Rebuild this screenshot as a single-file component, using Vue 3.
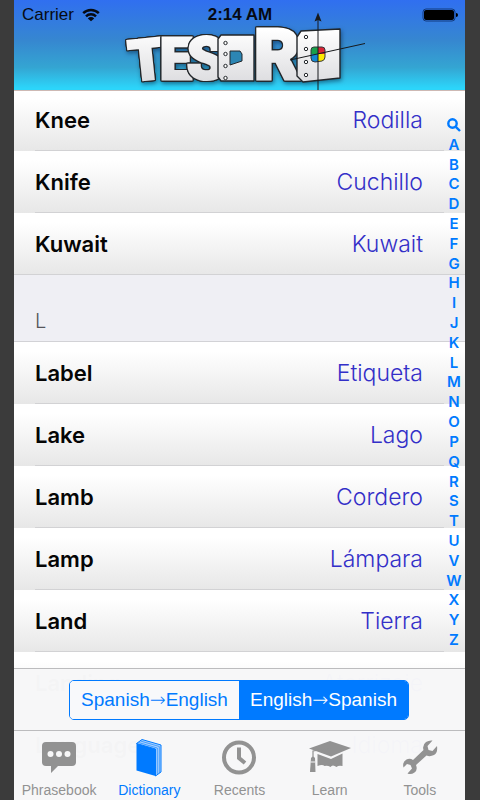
<script setup>
import { ref } from 'vue'

const before = [
  { en: 'Knee', es: 'Rodilla' },
  { en: 'Knife', es: 'Cuchillo' },
  { en: 'Kuwait', es: 'Kuwait' },
]
const after = [
  { en: 'Label', es: 'Etiqueta' },
  { en: 'Lake', es: 'Lago' },
  { en: 'Lamb', es: 'Cordero' },
  { en: 'Lamp', es: 'Lámpara' },
  { en: 'Land', es: 'Tierra' },
  { en: 'Landing', es: 'Aterrizaje' },
  { en: 'Language', es: 'Idioma' },
]
const sections = [
  { title: '', words: before },
  { title: 'L', words: after },
]
const letters = 'ABCDEFGHIJKLMNOPQRSTUVWXYZ'.split('')
const direction = ref('en')
const tabs = ['Phrasebook', 'Dictionary', 'Recents', 'Learn', 'Tools']
const active = ref('Dictionary')
const leftRivets = [43, 54, 66, 78]
const rightRivets = [37, 49, 62, 75]
const glyphs = [
  { c: 'T', x: 131, y: 81, r: -6, s: 56 },
  { c: 'E', x: 160, y: 79, r: 0, s: 57 },
  { c: 'S', x: 187, y: 79, r: 0, s: 60 },
  { c: 'R', x: 254, y: 79, r: 0, s: 71 },
]
</script>

<template>
  <div class="phone">
    <header class="header">
      <div class="status">
        <span class="carrier">
          Carrier
          <svg class="wifi" viewBox="0 0 18 14" aria-hidden="true">
            <path d="M1.2 5.2a11 11 0 0 1 15.6 0M4 8.4a7 7 0 0 1 10 0" />
            <path class="dot" d="M9 13.2 5.8 10.4a4.6 4.6 0 0 1 6.4 0Z" />
          </svg>
        </span>
        <span class="time">2:14 AM</span>
        <svg class="battery" viewBox="0 0 36 14" aria-hidden="true">
          <rect class="case" x="1" y="1" width="32" height="12" rx="3" />
          <rect x="2" y="2" width="30" height="10" rx="2" />
          <path d="M34 5q2 0 2 2t-2 2Z" />
        </svg>
      </div>
      <svg class="logo" viewBox="115 10 250 80" role="img" aria-label="TESORO">
        <defs>
          <linearGradient id="metal" x1="0" y1="30" x2="0" y2="84" gradientUnits="userSpaceOnUse">
            <stop offset="0" stop-color="#fff" />
            <stop offset="1" stop-color="#dcdcdf" />
          </linearGradient>
        </defs>
        <g class="shadowed">
          <text v-for="g in glyphs" :key="g.c" class="face" :x="g.x" :y="g.y" :rotate="g.r" :font-size="g.s">{{ g.c }}</text>
          <path class="plate" d="M221 35H254V81H221L218 77V39Z" />
          <path class="hole" d="M230 51H240L242 54V61L230 65Z" />
          <path class="plate" d="M301 31 340 29V78L303 82L297 76V37Z" />
        </g>
        <g class="rivet">
          <circle v-for="y in leftRivets" :key="y" cx="225.5" :cy="y" r="1.7" />
          <circle v-for="y in rightRivets" :key="y" cx="306" :cy="y" r="1.7" />
        </g>
        <path d="M318 47V54H311V50Q311 47 314 47Z" fill="#19a04b" />
        <path d="M318 47H322Q325 47 325 50V54H318Z" fill="#d92335" />
        <path d="M311 54H318V62H315Q311 62 311 58Z" fill="#1587d2" />
        <path d="M318 54H325V57Q325 60 322 61L318 62Z" fill="#ffe800" />
        <path class="gem" d="M314 47H322Q325 47 325 50V57Q325 60 322 61L315 62Q311 62 311 58V50Q311 47 314 47Z" />
        <path class="axis" d="M318 90V16M290 60 365 43.5" />
        <path d="M318 12.5 321.5 21.5 318 20 314.5 21.5Z" fill="#17191c" />
      </svg>
    </header>

    <main class="list">
      <section v-for="s in sections" :key="s.title" class="section">
        <h2 v-if="s.title" class="heading">{{ s.title }}</h2>
        <ul class="words">
          <li v-for="w in s.words" :key="w.en" class="word">
            <span class="en">{{ w.en }}</span>
            <span class="es">{{ w.es }}</span>
          </li>
        </ul>
      </section>
      <nav class="index" aria-label="Index">
        <a href="#search" aria-label="Search">
          <svg viewBox="0 0 14 14" aria-hidden="true"><circle cx="5.5" cy="5.5" r="4.2" /><path d="m8.8 8.8 4.2 4.2" /></svg>
        </a>
        <a v-for="l in letters" :key="l" :href="'#' + l">{{ l }}</a>
      </nav>
    </main>

    <footer class="footer">
      <div class="switcher">
        <div class="segments">
          <button type="button" :class="{ on: direction === 'es' }" @click="direction = 'es'">Spanish<span class="arrow">→</span>English</button>
          <button type="button" :class="{ on: direction === 'en' }" @click="direction = 'en'">English<span class="arrow">→</span>Spanish</button>
        </div>
      </div>
      <nav class="tabs">
        <button v-for="t in tabs" :key="t" type="button" :class="['tab', { current: active === t }]" @click="active = t">
          <svg v-if="t === 'Phrasebook'" class="icon" viewBox="0 0 44 40" aria-hidden="true">
            <path d="M9 4H35q4 0 4 4V24q0 4-4 4H21L14 35V28H9q-4 0-4-4V8q0-4 4-4Z" />
            <g fill="#f7f7f8"><circle cx="13.5" cy="16" r="3" /><circle cx="22" cy="16" r="3" /><circle cx="30.5" cy="16" r="3" /></g>
          </svg>
          <svg v-else-if="t === 'Dictionary'" class="icon" viewBox="0 0 44 40" aria-hidden="true">
            <path d="M9.5 5.5 15 1.5 34 7V34L28.5 38V11Z" fill="#a9d1ff" />
            <path d="M9.5 5.5 15 1.5 34 7V34L28.5 38V11Z" fill="none" stroke="#007aff" />
            <path d="M11.5 4.5 30.3 10V36M13.5 3 32.3 8.5V35" fill="none" stroke="#007aff" stroke-width=".6" />
            <path d="M9.5 5.5 28.5 11V38L9.5 32.5Z" />
          </svg>
          <svg v-else-if="t === 'Recents'" class="icon" viewBox="0 0 44 40" aria-hidden="true">
            <circle cx="22" cy="19.5" r="15" fill="none" stroke="currentColor" stroke-width="4" />
            <path d="M22 9.5V20L28 25" fill="none" stroke="currentColor" stroke-width="4" />
          </svg>
          <svg v-else-if="t === 'Learn'" class="icon" viewBox="0 0 44 40" aria-hidden="true">
            <path d="M1 10.5 22 3 43 10 23 18.5Z" />
            <path d="M9.5 16 23 21 34.5 15.5V28q-4-1-6 1-4-3-6 0-3-2-6-1-2-2-7 0Z" />
            <path d="M22 10.5 5 13V21" fill="none" stroke="currentColor" stroke-width="1.2" />
            <path d="M3 20q2-3 4 0L7.5 34H2Z" />
            <path d="M2.5 24H7" stroke="#f7f7f8" />
          </svg>
          <svg v-else class="icon" viewBox="0 0 44 40" aria-hidden="true">
            <path d="M34.5 2.5 29.5 8 30.5 12 34.5 13 39 8Q40 14.5 36 17 32 19 28.5 17.5L18 27Q20 32 16.5 34.5 13 37 9.5 35.5L14 30.5 12.5 27 9 26 5.5 29.5Q4 24 8.5 21.5 12 20 15 22L25.5 12Q24 7 28 4 31 2 34.5 2.5Z" />
          </svg>
          <span>{{ t }}</span>
        </button>
      </nav>
    </footer>
  </div>
</template>

<style>
body {
  margin: 0;
  background: #3b3b3b;
}
</style>

<style scoped>
.phone {
  position: relative;
  display: flex;
  flex-direction: column;
  height: 100vh;
  margin: 0 15px 0 14px;
  overflow: hidden;
  background: #fff;
  font-family: Inter, "Liberation Sans", sans-serif;
}
.header {
  position: relative;
  z-index: 1;
  display: flex;
  flex: none;
  flex-direction: column;
  box-sizing: border-box;
  height: 91px;
  border-bottom: 1px solid #cdb9b4;
  background: linear-gradient(#306ff0, #3687d0 45%, #34a5d2 75%, #2cd5fa 98%);
}
.status {
  display: grid;
  grid-template-columns: 1fr auto 1fr;
  align-items: center;
  height: 30px;
  padding: 0 7px 0 8px;
  font-family: "Liberation Sans", sans-serif;
  font-size: 17px;
  color: #060a12;
}
.carrier {
  display: flex;
  align-items: center;
  gap: 8px;
}
.time {
  font-weight: 700;
}
.wifi {
  width: 18px;
  height: 14px;
  fill: none;
  stroke: #060a12;
  stroke-width: 2.4;
}
.wifi .dot {
  fill: #060a12;
  stroke: none;
}
.battery {
  justify-self: end;
  width: 36px;
  height: 14px;
}
.battery .case {
  fill: none;
  stroke: #123a7e;
}
.logo {
  position: absolute;
  top: 10px;
  left: 50%;
  width: 250px;
  height: 80px;
  margin-left: -125px;
}
.face {
  fill: url(#metal);
  stroke: url(#metal);
  stroke-width: 3px;
  font-family: Roboto, "Liberation Sans", sans-serif;
  font-weight: 900;
  filter: drop-shadow(1px 0 0 #22262a) drop-shadow(-1px 0 0 #22262a) drop-shadow(0 1px 0 #22262a) drop-shadow(0 -1px 0 #22262a);
}
.plate {
  fill: url(#metal);
  stroke: #22262a;
  stroke-width: 1.4;
  stroke-linejoin: round;
}
.hole {
  fill: #2c86b4;
  stroke: #22262a;
}
.shadowed {
  filter: drop-shadow(1px 2px 2px rgba(0, 30, 60, 0.5));
}
.rivet {
  fill: #fff;
  stroke: #22262a;
}
.gem {
  fill: none;
  stroke: #34373a;
}
.axis {
  fill: none;
  stroke: #17191c;
}
.list {
  position: relative;
  flex: 1;
  min-height: 0;
  margin-top: -2px;
}
.words {
  margin: 0;
  padding: 0;
  list-style: none;
}
.word {
  position: relative;
  display: flex;
  align-items: center;
  justify-content: space-between;
  box-sizing: border-box;
  height: 62px;
  padding: 0 42px 0 21px;
  background: linear-gradient(#fff 15%, #e7e7e7);
}
.word::after {
  content: "";
  position: absolute;
  right: 21px;
  bottom: 0;
  left: 21px;
  height: 1px;
  background: #d2d2d4;
}
.word:last-child::after {
  right: 0;
  left: 0;
}
.en {
  font-size: 22px;
  font-weight: 600;
  color: #050505;
}
.es {
  font-size: 23px;
  font-weight: 300;
  color: #332fc8;
}
.heading {
  display: flex;
  align-items: flex-end;
  box-sizing: border-box;
  height: 67px;
  margin: 0;
  padding: 0 21px 9px;
  border-bottom: 1px solid #d2d2d6;
  background: #efeff4;
  font-size: 20px;
  line-height: 22px;
  font-weight: 300;
  color: #55555a;
}
.index {
  position: absolute;
  top: 26px;
  right: 3px;
  display: flex;
  flex-direction: column;
  width: 16px;
  height: 535px;
}
.index a {
  display: flex;
  flex: 1;
  align-items: center;
  justify-content: center;
  min-height: 0;
  font-size: 15px;
  line-height: 16px;
  font-weight: 600;
  color: #007aff;
  text-decoration: none;
}
.index svg {
  width: 14px;
  height: 14px;
  fill: none;
  stroke: #007aff;
  stroke-width: 2.4;
}
.footer {
  position: absolute;
  right: 0;
  bottom: 0;
  left: 0;
  z-index: 2;
  background: rgba(247, 247, 248, 0.987);
}
.switcher {
  display: flex;
  align-items: center;
  justify-content: center;
  box-sizing: border-box;
  height: 62px;
  padding-right: 1px;
  border-top: 1px solid #bcbcbe;
}
.segments {
  display: grid;
  grid-template-columns: 1fr 1fr;
  box-sizing: border-box;
  width: 340px;
  height: 40px;
  overflow: hidden;
  border: 1px solid #007aff;
  border-radius: 5px;
}
.segments button {
  padding: 0;
  border: 0;
  background: #f8f9fb;
  font-family: "Liberation Sans", sans-serif;
  font-size: 19px;
  color: #007aff;
  white-space: nowrap;
}
.segments .on {
  background: #007aff;
  color: #fff;
}
.arrow {
  font-family: "DejaVu Sans", sans-serif;
  font-weight: 200;
}
.tabs {
  display: grid;
  grid-template-columns: repeat(5, 1fr);
  box-sizing: border-box;
  height: 70px;
  border-top: 1px solid #bcbcbe;
}
.tab {
  display: flex;
  flex-direction: column;
  align-items: center;
  gap: 3px;
  padding: 7px 0 0;
  border: 0;
  background: none;
  font-family: "Liberation Sans", sans-serif;
  font-size: 14px;
  line-height: 18px;
  color: #929292;
}
.current {
  color: #007aff;
}
.icon {
  width: 44px;
  height: 40px;
  fill: currentColor;
}
</style>
